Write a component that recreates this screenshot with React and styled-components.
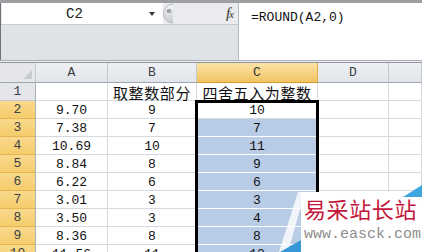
import React from "react";
import styled, { createGlobalStyle } from "styled-components";

const GlobalStyle = createGlobalStyle`
	html, body {
		margin: 0;
		padding: 0;
		background: #ffffff;
	}
`;

const COLS = [36, 72, 89, 121, 71];
const HEADER_H = 20;
const ROW_H = 18;

const rows = [
	["", "取整数部分", "四舍五入为整数"],
	["9.70", "9", "10"],
	["7.38", "7", "7"],
	["10.69", "10", "11"],
	["8.84", "8", "9"],
	["6.22", "6", "6"],
	["3.01", "3", "3"],
	["3.50", "3", "4"],
	["8.36", "8", "8"],
	["11.56", "11", "12"],
];

const Page = styled.div`
	position: relative;
	width: 422px;
	height: 252px;
	overflow: hidden;
	background: #ffffff;
	font-family: "Liberation Mono", monospace;
`;

const FormulaBar = styled.div`
	display: flex;
	height: 61px;
	box-sizing: border-box;
	border-top: 3px solid #9c9ea2;
	border-bottom: 1px solid #a9adb4;
	background: #dfe2e7;
`;

const LeftArea = styled.div`
	display: flex;
	flex-direction: column;
	width: 238px;
	border-left: 1px solid #6f7378;
	box-sizing: border-box;
`;

const TopRow = styled.div`
	display: flex;
	align-items: stretch;
	height: 22px;
	box-sizing: border-box;
	border-bottom: 1px solid #c6cad1;
	background: #e9ebee;
`;

const NameBox = styled.div`
	display: flex;
	align-items: center;
	width: 161px;
	margin-left: 1px;
	background: #ffffff;
`;

const NameText = styled.span`
	flex: 0 0 145px;
	text-align: center;
	font-size: 14px;
	color: #222;
`;

const Arrow = styled.span`
	width: 0;
	height: 0;
	margin-left: 2px;
	border-left: 3.5px solid transparent;
	border-right: 3.5px solid transparent;
	border-top: 4px solid #333;
`;

const Handle = styled.svg`
	width: 10px;
	height: 21px;
	flex: 0 0 10px;
`;

const Fx = styled.span`
	margin-left: auto;
	margin-right: 5px;
	align-self: center;
	font-family: "Liberation Serif", serif;
	font-style: italic;
	font-size: 15px;
	color: #333;
	letter-spacing: -1px;

	small {
		font-size: 11px;
	}
`;

const FormulaInput = styled.div`
	flex: 1;
	background: #ffffff;
	border-left: 1px solid #b7bcc4;
	padding: 7px 0 0 12px;
	font-size: 13px;
	line-height: 15px;
	color: #111;
`;

const Strip = styled.div`
	height: 1px;
	background: #eef0f3;
	border-bottom: 1px solid #8f949b;
`;

const Sheet = styled.div`
	position: relative;
	display: grid;
	grid-template-columns: ${COLS.map((w) => w + "px").join(" ")} 1fr;
	grid-template-rows: ${HEADER_H}px;
	grid-auto-rows: ${ROW_H}px;
`;

const Corner = styled.div`
	position: relative;
	box-sizing: border-box;
	background: #e4e6ea;
	border-right: 1px solid #c3c8cf;
	border-bottom: 1px solid #9ea6b2;

	&::after {
		content: "";
		position: absolute;
		right: 3px;
		bottom: 3px;
		border-left: 9px solid transparent;
		border-bottom: 9px solid #c7cacf;
	}
`;

const ColHead = styled.div`
	display: flex;
	align-items: center;
	justify-content: center;
	box-sizing: border-box;
	font-size: 13px;
	color: ${(p) => (p.$active ? "#333" : "#3b3f45")};
	background: ${(p) =>
		p.$active
			? "linear-gradient(#fae3a8, #f2c462)"
			: "linear-gradient(#eef0f3, #e1e4e9)"};
	border-right: 1px solid ${(p) => (p.$active ? "#e0ae4c" : "#c3c8cf")};
	border-bottom: 1px solid ${(p) => (p.$active ? "#d49b32" : "#9ea6b2")};
`;

const RowHead = styled.div`
	display: flex;
	align-items: center;
	justify-content: center;
	box-sizing: border-box;
	font-size: 13px;
	color: #3b3f45;
	background: ${(p) =>
		p.$active ? "linear-gradient(#f9d98c, #f4cc6c)" : "#e4e6ea"};
	border-right: 1px solid #a8b0bc;
	border-bottom: 1px solid ${(p) => (p.$active ? "#e4b450" : "#c3c8cf")};
`;

const Cell = styled.div`
	display: flex;
	align-items: center;
	justify-content: center;
	box-sizing: border-box;
	white-space: nowrap;
	overflow: visible;
	font-size: ${(p) => (p.$cjk ? "15px" : "13px")};
	font-family: ${(p) =>
		p.$cjk
			? '"Noto Sans CJK SC", sans-serif'
			: '"Liberation Mono", monospace'};
	letter-spacing: ${(p) => (p.$cjk ? "0.6px" : "0")};
	color: #111;
	background: ${(p) => (p.$sel ? "#b9cce6" : "#ffffff")};
	border-right: 1px solid ${(p) => (p.$sel ? "#ffffff" : "#d6d9de")};
	border-bottom: 1px solid ${(p) => (p.$sel ? "#ffffff" : "#d6d9de")};
	padding-top: 1px;
`;

const Selection = styled.div`
	position: absolute;
	box-sizing: border-box;
	border: 3px solid #000;
	pointer-events: none;
`;

const Watermark = styled.div`
	position: absolute;
	left: 262px;
	top: 183px;
	width: 160px;
	height: 69px;
`;

const MarkShapes = styled.svg`
	position: absolute;
	left: 0;
	top: 0;
`;

const MarkText = styled.div`
	position: absolute;
	left: 42px;
	top: 12px;
	display: flex;
	flex-direction: column;
	gap: 6px;
	white-space: nowrap;
`;

const MarkTitle = styled.span`
	font-family: "Noto Sans CJK SC", sans-serif;
	font-size: 22px;
	line-height: 26px;
	letter-spacing: 0.6px;
	color: #c3163a;
`;

const MarkUrl = styled.span`
	font-family: "Liberation Mono", monospace;
	font-size: 15px;
	line-height: 16px;
	color: #8e8e8e;
`;

function App() {
	const letters = ["A", "B", "C", "D", ""];
	const selLeft = COLS[0] + COLS[1] + COLS[2] - 2;
	const selTop = HEADER_H + ROW_H - 1;

	return (
		<Page>
			<GlobalStyle />
			<FormulaBar>
				<LeftArea>
					<TopRow>
						<NameBox>
							<NameText>C2</NameText>
							<Arrow />
						</NameBox>
						<Handle viewBox="0 0 10 21">
							<defs>
								<linearGradient id="hg" x1="0" y1="0" x2="0" y2="1">
									<stop offset="0" stopColor="#f4f5f7" />
									<stop offset="1" stopColor="#c9ccd1" />
								</linearGradient>
							</defs>
							<circle cx="10" cy="10.5" r="9.5" fill="url(#hg)" stroke="#b3b7bd" />
							<ellipse cx="6" cy="8" rx="2.5" ry="2" fill="#9ea2a8" />
						</Handle>
						<Fx>
							f<small>x</small>
						</Fx>
					</TopRow>
				</LeftArea>
				<FormulaInput>=ROUND(A2,0)</FormulaInput>
			</FormulaBar>
			<Strip />
			<Sheet>
				<Corner />
				{letters.map((l, i) => (
					<ColHead key={i} $active={l === "C"}>
						{l}
					</ColHead>
				))}
				{rows.map((r, ri) => (
					<React.Fragment key={ri}>
						<RowHead $active={ri > 0}>{ri + 1}</RowHead>
						<Cell $cjk={ri === 0}>{r[0]}</Cell>
						<Cell $cjk={ri === 0}>{r[1]}</Cell>
						<Cell $cjk={ri === 0} $sel={ri > 1}>
							{r[2]}
						</Cell>
						<Cell />
						<Cell />
					</React.Fragment>
				))}
				<Selection
					style={{
						left: selLeft,
						top: selTop,
						width: COLS[3] + 3,
						height: 200,
					}}
				/>
			</Sheet>
			<Watermark>
				<MarkShapes width="160" height="69" viewBox="0 0 160 69">
					<polygon points="36,9 43,9 26,69 17,69" fill="#ffffff" opacity="0.8" />
					<rect x="39" y="9" width="121" height="60" fill="#ffffff" />
					<polygon points="18,69 39,57 39,69" fill="#3597d6" />
					<polygon points="141,14 160,2 160,14" fill="#3fa6e0" />
				</MarkShapes>
				<MarkText>
					<MarkTitle>易采站长站</MarkTitle>
					<MarkUrl>www.easck.com</MarkUrl>
				</MarkText>
			</Watermark>
		</Page>
	);
}

export default App;
